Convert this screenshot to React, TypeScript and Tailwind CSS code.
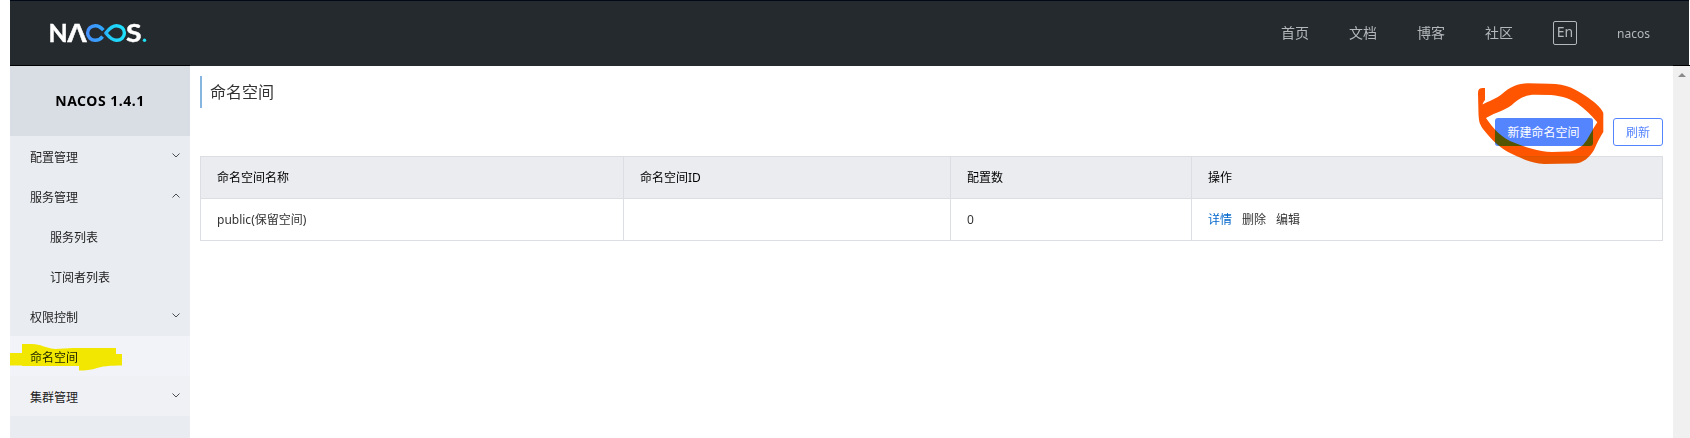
import React from "react";

const NAV = ["首页", "文档", "博客", "社区"];

type MenuItem = {
  label: string;
  arrow?: "up" | "down";
  child?: boolean;
  tone?: string;
  marked?: boolean;
};

const MENU: MenuItem[] = [
  { label: "配置管理", arrow: "down" },
  { label: "服务管理", arrow: "up" },
  { label: "服务列表", child: true },
  { label: "订阅者列表", child: true },
  { label: "权限控制", arrow: "down" },
  { label: "命名空间", tone: "bg-[#f2f3f8]", marked: true },
  { label: "集群管理", arrow: "down", tone: "bg-[#f0f1f5]" },
];

function Logo() {
  return (
    <svg width="110" height="40" viewBox="-4 -8 110 40" className="-ml-1 mb-0.5 shrink-0 overflow-visible" aria-label="NACOS">
      <defs>
        <linearGradient id="loop" gradientUnits="userSpaceOnUse" x1="36" y1="0" x2="76" y2="0">
          <stop offset="0" stopColor="#4790ff" />
          <stop offset="0.45" stopColor="#2fa8fb" />
          <stop offset="0.6" stopColor="#20cdf8" />
          <stop offset="1" stopColor="#1fe3ff" />
        </linearGradient>
      </defs>
      <g fill="#fff" stroke="#fff" strokeWidth="0.4" fontFamily="Lato, sans-serif" fontWeight="700" fontSize="24.5">
        <text x="-1.6" y="20.8" textLength="19.2" lengthAdjust="spacingAndGlyphs">N</text>
        <text x="17.2" y="20.8" fontFamily="Noto Sans, sans-serif" fontWeight="600" textLength="19.6" lengthAdjust="spacingAndGlyphs">Λ</text>
        <text x="76" y="20.8" textLength="15.6" lengthAdjust="spacingAndGlyphs">S</text>
      </g>
      <path
        d="M52.6 15.6C50.7 18 48.4 19.3 45.4 19.3C41 19.3 37.6 16 37.6 12C37.6 8 41 4.7 45.4 4.7C48.8 4.7 51.2 6.6 53.4 9.2M55.8 12C58.4 8.8 61.2 4.7 66.6 4.7C71 4.7 74.4 8 74.4 12C74.4 16 71 19.3 66.6 19.3C61.2 19.3 58.4 15.2 55.8 12Z"
        fill="none"
        stroke="url(#loop)"
        strokeWidth="3.4"
        strokeLinejoin="round"
      />
      <circle cx="94.5" cy="19.3" r="1.7" fill="#20e0f5" />
    </svg>
  );
}

function Arrow({ dir }: { dir: "up" | "down" }) {
  return (
    <svg width="8" height="5" viewBox="0 0 8 5">
      <path
        d={dir === "down" ? "M0.5 0.5L4 4L7.5 0.5" : "M0.5 4.5L4 1L7.5 4.5"}
        fill="none"
        stroke="#4a4f55"
        strokeWidth="1"
      />
    </svg>
  );
}

function Header() {
  return (
    <header className="mr-px flex h-[66px] shrink-0 items-center border-t border-[#020a18] bg-[#252a2f] pl-10 text-sm text-[#b4b8bb]">
      <Logo />
      <nav className="ml-auto flex items-center gap-10 pb-px pr-[39px]">
        {NAV.map((n) => (
          <a key={n} className="leading-5">{n}</a>
        ))}
        <span className="flex h-6 w-6 items-center justify-center rounded-[2px] border border-[#b4b8bb] pb-[3px] leading-5">
          En
        </span>
        <span className="w-[33px] pt-0.5 text-[12px] leading-5">nacos</span>
      </nav>
    </header>
  );
}

function Sidebar() {
  return (
    <aside className="-mt-px flex w-[180px] shrink-0 flex-col border-t border-black bg-[#e9ecf1] text-[12px] text-[#222]">
      <div className="flex h-[70px] items-center justify-center bg-[#d9dde4] pb-0.5 text-[14px] font-bold tracking-[0.5px] text-black">
        NACOS 1.4.1
      </div>
      {MENU.map((m) => (
        <div
          key={m.label}
          className={`relative flex h-10 items-center justify-between pr-[10px] pt-1 ${m.child ? "pl-10" : "pl-5"} ${m.tone ?? ""}`}
        >
          <span>{m.label}</span>
          {m.arrow && (
            <span className="pb-1.5">
              <Arrow dir={m.arrow} />
            </span>
          )}
          {m.marked && (
            <svg width="112" height="30" viewBox="0 0 112 30" className="absolute left-0 top-[7px] mix-blend-darken">
              <path
                d="M0 10H12V1H22C31 1 35 5 45 6L63 5H106V11H112V22.5C100 22.5 92 23 84 26C78 27.5 74 27.5 69 27.5V23H12V22.5H0Z"
                fill="#f5e700"
              />
            </svg>
          )}
        </div>
      ))}
    </aside>
  );
}

function NamespaceTable() {
  const cell = "border border-[#dcdee3] pl-4 text-left font-normal";
  return (
    <table className="mt-[10px] w-[1463px] table-fixed border-collapse text-[12px]">
      <colgroup>
        <col className="w-[423px]" />
        <col className="w-[327px]" />
        <col className="w-[241px]" />
        <col />
      </colgroup>
      <thead>
        <tr className="h-[42px] bg-[#ebecf0] text-black">
          <th className={cell}>命名空间名称</th>
          <th className={cell}>命名空间ID</th>
          <th className={cell}>配置数</th>
          <th className={cell}>操作</th>
        </tr>
      </thead>
      <tbody>
        <tr className="h-[42px] text-[#333]">
          <td className={cell}>public(保留空间)</td>
          <td className={cell} />
          <td className={cell}>0</td>
          <td className={cell}>
            <div className="flex gap-[10px]">
              <a className="text-[#0066cc]">详情</a>
              <span>删除</span>
              <span>编辑</span>
            </div>
          </td>
        </tr>
      </tbody>
    </table>
  );
}

export default function App() {
  return (
    <div className="flex h-[438px] w-[1690px] flex-col overflow-hidden bg-white pl-[10px] font-['Noto_Sans','Noto_Sans_CJK_SC',sans-serif]">
      <Header />
      <div className="flex min-h-0 flex-1">
        <Sidebar />
        <main className="flex min-w-0 flex-1 flex-col pl-[10px] pt-[10px]">
          <h1 className="flex h-8 items-center border-l-2 border-[#86b6e0] pl-2 text-[16px] text-[#333]">
            命名空间
          </h1>
          <div className="mt-[10px] flex w-[1463px] justify-end gap-5 text-[12px]">
            <div className="relative flex">
              <button className="h-7 w-[98px] rounded-[3px] bg-[#5584ff] pr-px pt-px text-white">新建命名空间</button>
              <svg
                width="130"
                height="84"
                viewBox="0 0 130 84"
                className="pointer-events-none absolute -left-[19px] -top-[36px] max-w-none mix-blend-darken"
              >
                <path
                  fillRule="evenodd"
                  fill="#ff5500"
                  d="M4 2.500C5 2 8 2 9 2L9 14C8 15 7 17 6.500 18.500C13 15 20 13 26 8C34 1 42 -2.700 52 -2.700L73 -2.300C91 -2.300 101 4 109 9.500C117 15 125 21 127.300 27L127.300 46C124 51 121 57 118 64C114 71 107 77.500 98 77.500L68 78C54 77.500 43 71 32 66C22 60 14 52 7 43C3 37 3 35 2.500 28L2 8C2 5 2.500 3 4 2.500ZM10 32C20 26 31 24 38 17C45 11 51 8.700 59 8.700L75 9C87 10 95 13 102 18C109 23 115 29 121.300 36.300C116 44 112 54 107 59C101 63 98 65.500 92 65.500L76 66C62 65.500 49 61 39 57C25 52 17 42 10 32Z"
                  transform="translate(0 4)"
                />
              </svg>
            </div>
            <button className="h-7 w-[50px] rounded-[3px] border border-[#5584ff] pt-px text-[#5584ff]">刷新</button>
          </div>
          <NamespaceTable />
        </main>
        <div className="-mt-px flex w-[17px] shrink-0 justify-center border-t border-black bg-[#f0f0f0] pt-[7px]">
          <svg width="8" height="4" viewBox="0 0 8 4">
            <path d="M4 0L8 4H0Z" fill="#8a8a8a" />
          </svg>
        </div>
      </div>
    </div>
  );
}
